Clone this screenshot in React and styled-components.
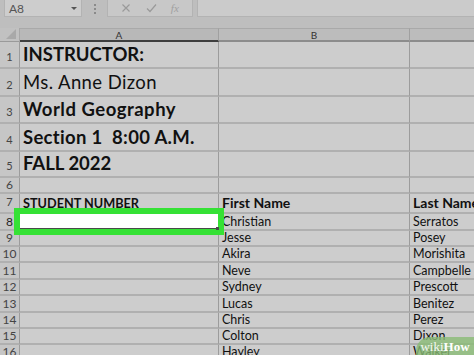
import React from "react";
import styled, { createGlobalStyle } from "styled-components";

const Global = createGlobalStyle`
  html, body { margin: 0; padding: 0; background: #bdbdbd; overflow: hidden; }
  body { width: 474px; height: 355px; font-family: Lato, "Open Sans", sans-serif; }
`;

const Page = styled.div`
  position: relative;
  width: 474px;
  height: 355px;
  overflow: hidden;
  background: #bdbdbd;
  display: flex;
  flex-direction: column;
`;

const TopBar = styled.div`
  height: 28px;
  flex: none;
  display: flex;
  align-items: flex-start;
  padding-left: 4px;
  box-sizing: border-box;
  background: #bebebe;
`;

const NameBox = styled.div`
  width: 78px;
  height: 17px;
  box-sizing: border-box;
  background: #cdcdcd;
  border: 1px solid #b3b3b3;
  border-top: none;
  display: flex;
  align-items: center;
  justify-content: space-between;
  padding: 0 4px 0 4px;
  font-size: 12px;
  color: #555;
`;

const Caret = styled.span`
  width: 0;
  height: 0;
  border-left: 3px solid transparent;
  border-right: 3px solid transparent;
  border-top: 3px solid #555;
`;

const Dots = styled.div`
  width: 25px;
  height: 17px;
  display: flex;
  flex-direction: column;
  align-items: center;
  justify-content: center;
  gap: 2px;
  & > i { width: 2px; height: 2px; background: #8a8a8a; display: block; }
`;

const FxBox = styled.div`
  width: 86px;
  height: 17px;
  box-sizing: border-box;
  background: #c8c8c8;
  border: 1px solid #b3b3b3;
  border-top: none;
  display: flex;
  align-items: center;
  justify-content: space-around;
  padding: 0 6px;
  color: #999;
`;

const FxText = styled.span`
  font-family: "Liberation Serif", serif;
  font-style: italic;
  font-size: 11px;
  color: #a0a0a0;
`;

const FormulaInput = styled.div`
  flex: 1;
  margin-left: 4px;
  height: 17px;
  box-sizing: border-box;
  background: #cbcbcb;
  border: 1px solid #b3b3b3;
  border-top: none;
  border-right: none;
`;

const Sheet = styled.div`
  display: grid;
  grid-template-columns: 20px 199px 191px 1fr;
  grid-template-rows: 14px 27px 28px 27px 28px 26px 16px 20px 17px 16px 16px 17px 16px 17px 16px 16px 16px;
  flex: none;
`;

const Corner = styled.div`
  position: relative;
  background: #c1c1c1;
  border-bottom: 1px solid #9a9a9a;
  border-right: 1px solid #a8a8a8;
  box-sizing: border-box;
  display: flex;
  align-items: flex-end;
  justify-content: flex-end;
  padding: 0 3px 2px 0;
`;

const ColHead = styled.div`
  background: ${(p) => (p.$active ? "#b8b8b8" : "#bcbcbc")};
  border-bottom: 2px solid ${(p) => (p.$active ? "#3e3e3e" : "#8c8c8c")};
  border-right: 1px solid #a0a0a0;
  box-sizing: border-box;
  display: flex;
  align-items: center;
  justify-content: center;
  font-size: 10px;
  color: #333;
  border-top: 1px solid #a9a9a9;
`;

const RowHead = styled.div`
  background: #c6c6c6;
  border-bottom: 2px solid #b0b0b0;
  border-right: 1px solid #9c9c9c;
  box-sizing: border-box;
  display: flex;
  align-items: flex-end;
  justify-content: center;
  padding-bottom: ${(p) => (p.$tall ? "3px" : "0px")};
  font-size: ${(p) => (p.$tall ? "11px" : "12px")};
  line-height: 14px;
  color: ${(p) => (p.$active ? "#222" : "#444")};
`;

const Cell = styled.div`
  position: relative;
  background: ${(p) => (p.$white ? "#ffffff" : "#cdcdcd")};
  border-bottom: 2px solid #b0b0b0;
  border-right: 1px solid #9c9c9c;
  box-sizing: border-box;
  display: flex;
  align-items: flex-end;
  padding-left: 3px;
  white-space: nowrap;
  overflow: visible;
  color: #111;
  font-size: ${(p) => p.$size || 12}px;
  font-weight: ${(p) => (p.$bold ? 700 : 400)};
  letter-spacing: ${(p) => p.$ls || 0}px;
  line-height: 1;
  padding-bottom: ${(p) => p.$pb || 1}px;
  z-index: ${(p) => (p.$white ? 2 : 0)};
`;

const Selection = styled.div`
  position: absolute;
  left: -6px;
  right: -6px;
  top: -6px;
  bottom: -6px;
  border: 6px solid #35e135;
  pointer-events: none;
  &::after {
    content: "";
    position: absolute;
    left: 0;
    right: 1px;
    bottom: 0;
    height: 1px;
    background: #4a4a4a;
  }
  &::before {
    content: "";
    position: absolute;
    right: -1px;
    bottom: -1px;
    width: 3px;
    height: 3px;
    background: #4a4a4a;
  }
`;

const Watermark = styled.div`
  position: absolute;
  right: -4px;
  bottom: -6px;
  width: 62px;
  height: 24px;
  border-radius: 14px 0 0 0;
  background: rgba(138, 188, 118, 0.8);
  display: flex;
  align-items: center;
  justify-content: center;
  padding-right: 4px;
  padding-bottom: 5px;
  box-sizing: border-box;
  color: #fff;
  font-family: "Liberation Serif", serif;
  font-size: 13px;
  z-index: 5;
  & b { font-weight: 700; }
  & span { font-weight: 400; opacity: 0.9; }
`;

const XIcon = () => (
  <svg width="10" height="10" viewBox="0 0 10 10">
    <path d="M1.5 1.5 L8.5 8.5 M8.5 1.5 L1.5 8.5" stroke="#9a9a9a" strokeWidth="1.2" fill="none" />
  </svg>
);
const CheckIcon = () => (
  <svg width="11" height="10" viewBox="0 0 11 10">
    <path d="M1 5.5 L4 8.5 L10 1.5" stroke="#9a9a9a" strokeWidth="1.2" fill="none" />
  </svg>
);
const CornerTri = () => (
  <svg width="10" height="10" viewBox="0 0 10 10">
    <path d="M10 0 L10 10 L0 10 Z" fill="#a9a9a9" />
  </svg>
);

const top = [
  { n: 1, h: "INSTRUCTOR:", bold: true, ls: 0 },
  { n: 2, h: "Ms. Anne Dizon", bold: false, ls: 0.4 },
  { n: 3, h: "World Geography", bold: true, ls: 0.5 },
  { n: 4, h: "Section 1\u00a0\u00a08:00 A.M.", bold: true, ls: 0.3 },
  { n: 5, h: "FALL 2022", bold: true, ls: 0 },
  { n: 6, h: "", bold: false, ls: 0 },
];

const students = [
  ["Christian", "Serratos"],
  ["Jesse", "Posey"],
  ["Akira", "Morishita"],
  ["Neve", "Campbelle"],
  ["Sydney", "Prescott"],
  ["Lucas", "Benitez"],
  ["Chris", "Perez"],
  ["Colton", "Dixon"],
  ["Hayley", "Walker"],
];

export default function App() {
  return (
    <Page>
      <Global />
      <TopBar>
        <NameBox>
          A8
          <Caret />
        </NameBox>
        <Dots>
          <i />
          <i />
          <i />
        </Dots>
        <FxBox>
          <XIcon />
          <CheckIcon />
          <FxText>fx</FxText>
        </FxBox>
        <FormulaInput />
      </TopBar>
      <Sheet>
        <Corner>
          <CornerTri />
        </Corner>
        <ColHead $active>A</ColHead>
        <ColHead>B</ColHead>
        <ColHead />
        {top.map((r) => (
          <React.Fragment key={r.n}>
            <RowHead $tall={r.n < 6}>{r.n}</RowHead>
            <Cell $size={18.5} $bold={r.bold} $ls={r.ls} $pb={4}>
              {r.h}
            </Cell>
            <Cell />
            <Cell />
          </React.Fragment>
        ))}
        <RowHead $tall>7</RowHead>
        <Cell $size={12.7} $bold $pb={2}>STUDENT NUMBER</Cell>
        <Cell $size={14} $bold $pb={2}>First Name</Cell>
        <Cell $size={14} $bold $pb={2}>Last Name</Cell>
        {students.map((s, i) => (
          <React.Fragment key={s[0]}>
            <RowHead $active={i === 0}>{i + 8}</RowHead>
            <Cell $white={i === 0}>{i === 0 && <Selection />}</Cell>
            <Cell $size={12.5}>{s[0]}</Cell>
            <Cell $size={12.5}>{s[1]}</Cell>
          </React.Fragment>
        ))}
      </Sheet>
      <Watermark>
        <span>wiki</span>
        <b>How</b>
      </Watermark>
    </Page>
  );
}
